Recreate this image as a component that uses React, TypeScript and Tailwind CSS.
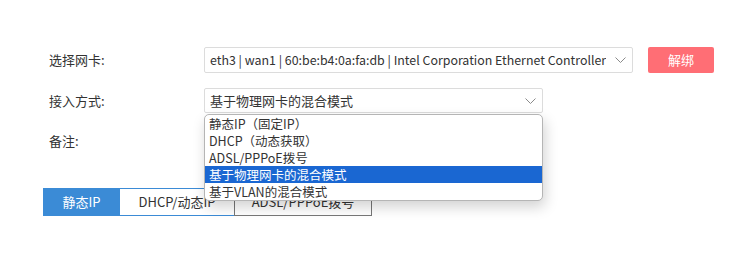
import React from 'react';

const font = { fontFamily: '"Noto Sans CJK SC", "Noto Sans", sans-serif' };

const Chevron = () => (
  <svg width="11" height="6" viewBox="0 0 11 6" className="shrink-0">
    <polyline points="0.5,0.5 5.5,5.5 10.5,0.5" fill="none" stroke="#8a8a8a" strokeWidth="1" />
  </svg>
);

const options = ['静态IP（固定IP）', 'DHCP（动态获取）', 'ADSL/PPPoE拨号', '基于物理网卡的混合模式', '基于VLAN的混合模式'];

export default function App() {
  return (
    <div className="w-[755px] h-[253px] bg-white text-[#333] relative" style={font}>
      <div className="pt-[47px] pl-[49px]">
        <div className="flex items-center h-[26px]">
          <div className="w-[155px] text-[13px]">选择网卡:</div>
          <div className="w-[429px] h-[26px] border border-[#dcdcdc] rounded-[2px] flex items-center justify-between pl-[5px] pr-[6px]">
            <span className="whitespace-nowrap overflow-hidden text-[12.4px]">eth3 | wan1 | 60:be:b4:0a:fa:db | Intel Corporation Ethernet Controller</span>
            <Chevron />
          </div>
          <button className="ml-[15px] w-[66px] h-[26px] rounded-[2px] bg-[#ff6e75] text-white text-[13px]">解绑</button>
        </div>

        <div className="flex items-center h-[25px] mt-[15px]">
          <div className="w-[155px] text-[13px]">接入方式:</div>
          <div className="relative">
            <div className="w-[339px] h-[25px] border border-[#dcdcdc] rounded-[2px] flex items-center justify-between pl-[5px] pr-[6px] text-[13px]">
              <span>基于物理网卡的混合模式</span>
              <Chevron />
            </div>
            <div className="absolute left-0 top-[26px] w-[339px] z-10 bg-white border border-[#b5b5b5] rounded-[5px] overflow-hidden shadow-[2px_6px_14px_rgba(0,0,0,0.18)]">
              {options.map((o, i) => (
                <div
                  key={o}
                  className={
                    'h-[17px] leading-[17px] pl-[4px] text-[12.5px] ' +
                    (i === 3 ? 'bg-[#1a67d2] text-white' : 'text-[#333]')
                  }
                >
                  {o}
                </div>
              ))}
            </div>
          </div>
        </div>

        <div className="flex items-center h-[26px] mt-[15px]">
          <div className="w-[155px] text-[13px]">备注:</div>
        </div>
      </div>

      <div className="pl-[43px] mt-[34px] flex h-[28px] text-[13px]">
        <div className="w-[77px] bg-[#3b8bd6] text-white flex items-center justify-center">静态IP</div>
        <div className="w-[114px] border-y border-[#3b8bd6] flex items-center justify-center">DHCP/动态IP</div>
        <div className="w-[138px] border border-[#777] flex items-center justify-center">ADSL/PPPoE拨号</div>
      </div>
    </div>
  );
}
